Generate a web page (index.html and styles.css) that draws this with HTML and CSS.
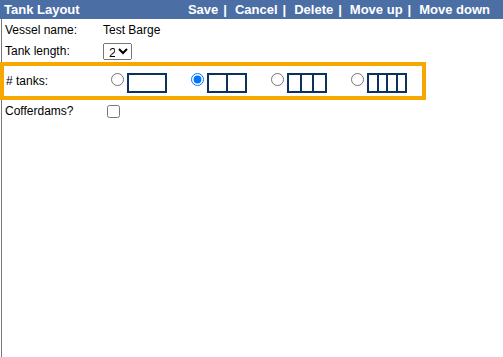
FILE: index.html
```html
<!DOCTYPE html>
<html lang="en">
<head>
  <meta charset="UTF-8">
  <title>Tank Layout</title>
  <link rel="stylesheet" href="styles.css">
</head>
<body>

  <div class="titlebar">
    <span class="title">Tank Layout</span>
    <nav class="actions">
      <a href="#">Save</a><span class="sep">|</span>
      <a href="#">Cancel</a><span class="sep">|</span>
      <a href="#">Delete</a><span class="sep">|</span>
      <a href="#">Move up</a><span class="sep">|</span>
      <a href="#">Move down</a>
    </nav>
  </div>

  <div class="sheet">
    <div class="row">
      <div class="label">Vessel name:</div>
      <div class="value">Test Barge</div>
    </div>

    <div class="row row-select">
      <div class="label">Tank length:</div>
      <div class="value">
        <select class="length">
          <option>1</option>
          <option selected>2</option>
          <option>3</option>
        </select>
      </div>
    </div>

    <div class="row tanks">
      <div class="label">#&nbsp;tanks:</div>
      <div class="options">
        <label class="option">
          <input type="radio" name="tanks">
          <span class="cells"><span class="cell"></span></span>
        </label>
        <label class="option">
          <input type="radio" name="tanks" checked>
          <span class="cells"><span class="cell"></span><span class="cell"></span></span>
        </label>
        <label class="option">
          <input type="radio" name="tanks">
          <span class="cells"><span class="cell"></span><span class="cell"></span><span class="cell"></span></span>
        </label>
        <label class="option">
          <input type="radio" name="tanks">
          <span class="cells"><span class="cell"></span><span class="cell"></span><span class="cell"></span><span class="cell"></span></span>
        </label>
      </div>
    </div>

    <div class="row row-check">
      <div class="label">Cofferdams?</div>
      <div class="value"><input type="checkbox" class="check"></div>
    </div>
  </div>

</body>
</html>
```

FILE: styles.css
```css
body {
  margin: 0;
  font-family: 'Liberation Sans', Arial, sans-serif;
  font-size: 12px;
  color: #000;
  background-color: #fff;
}

.titlebar {
  display: flex;
  justify-content: space-between;
  align-items: center;
  height: 19px;
  padding: 0 13px 0 4px;
  background-color: #4b6ea5;
  color: #fff;
  font-size: 13px;
  font-weight: bold;
}

.actions {
  display: flex;
  align-items: center;
}

.actions a {
  color: #fff;
  text-decoration: none;
}

.actions .sep {
  margin: 0 8px 0 5px;
}

.sheet {
  margin-left: 1px;
  border-left: 1px solid #777;
  height: 338px;
}

.row {
  display: flex;
  align-items: center;
  height: 21px;
}

.label {
  width: 98px;
  padding-left: 3px;
  flex-shrink: 0;
}

.value {
  display: flex;
  align-items: center;
}

.row-select {
  height: 22px;
}

.length {
  margin: 0;
  height: 17px;
  width: 29px;
  padding: 0 0 0 1px;
  font-family: 'Liberation Sans', Arial, sans-serif;
  font-size: 13px;
}

.tanks {
  box-sizing: border-box;
  margin-left: -2px;
  width: 426px;
  height: 38px;
  border: 4px solid #f7a800;
  align-items: flex-start;
}

.tanks .label {
  width: 105px;
  padding-left: 2px;
  line-height: 31px;
}

.options {
  display: flex;
  padding-top: 7px;
}

.option {
  display: flex;
  align-items: flex-start;
  gap: 3px;
  width: 80px;
}

.option input {
  margin: 0;
  width: 13px;
  height: 13px;
}

.cells {
  display: flex;
  box-sizing: border-box;
  width: 40px;
  height: 20px;
  border: 2px solid #0b3161;
}

.cell {
  flex: 1;
}

.cell + .cell {
  border-left: 2px solid #0b3161;
}

.row-check {
  height: 22px;
}

.check {
  margin: 0 0 0 4px;
  width: 13px;
  height: 13px;
}
```
